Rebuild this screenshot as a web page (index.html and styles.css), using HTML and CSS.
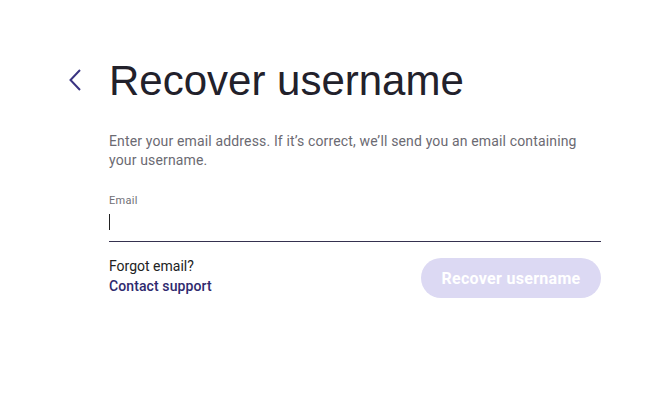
FILE: index.html
```html
<!DOCTYPE html>
<html>
<head>
<meta charset="utf-8">
<link rel="stylesheet" href="styles.css">
</head>
<body>
<main class="page">
  <div class="head-row">
    <a class="back" href="#" aria-label="Back">
      <svg width="14" height="24" viewBox="0 0 14 24"><path d="M12 2 L2.5 12 L12 22" fill="none" stroke="#3a3482" stroke-width="2"/></svg>
    </a>
    <h1 class="title">Recover username</h1>
  </div>
  <div class="content">
    <p class="desc">Enter your email address. If it’s correct, we’ll send you an email containing your username.</p>
    <label class="field">
      <span class="label">Email</span>
      <span class="input"><span class="caret"></span></span>
    </label>
    <div class="actions">
      <div class="help">
        <div class="forgot">Forgot email?</div>
        <a class="support" href="#">Contact support</a>
      </div>
      <button class="submit" disabled>Recover username</button>
    </div>
  </div>
</main>
</body>
</html>
```
FILE: styles.css
```css
* { box-sizing: border-box; }
html, body { margin: 0; background: #fff; }
body { font-family: Roboto, "Noto Sans", sans-serif; color: #222; }
.page { padding: 57px 44px 0 68px; width: 645px; }
.head-row { display: flex; align-items: center; gap: 27px; }
.back { display: flex; width: 14px; height: 24px; margin-top: -3px; }
.title {
  margin: 0;
  font-family: "Liberation Sans", Arial, sans-serif;
  font-weight: 400;
  font-size: 42px;
  line-height: 48px;
  color: #22212b;
}
.content { margin-left: 41px; padding-top: 27px; }
.desc {
  margin: 0;
  font-size: 14px;
  line-height: 19px;
  letter-spacing: 0.15px;
  color: #6b6a72;
}
.field { display: block; margin-top: 24px; }
.label { display: block; font-size: 11px; letter-spacing: 0.3px; color: #6f6e76; line-height: 14px; }
.input { display: flex; align-items: center; height: 34px; border-bottom: 1px solid #35314f; }
.caret { display: block; width: 1px; height: 16px; background: #222; margin-top: -6px; }
.actions { display: flex; justify-content: space-between; align-items: flex-start; margin-top: 14px; }
.help { font-size: 14px; line-height: 20px; }
.forgot { color: #222; }
.support { color: #2f2a6e; text-decoration: none; font-weight: 500; letter-spacing: 0.1px; }
.submit {
  width: 180px; height: 40px; border: none; border-radius: 20px;
  background: #dcd9f3; color: #fff;
  font-family: Roboto, sans-serif; font-weight: 700; font-size: 16px;
  letter-spacing: 0.3px;
  margin-top: 2px;
}
```
